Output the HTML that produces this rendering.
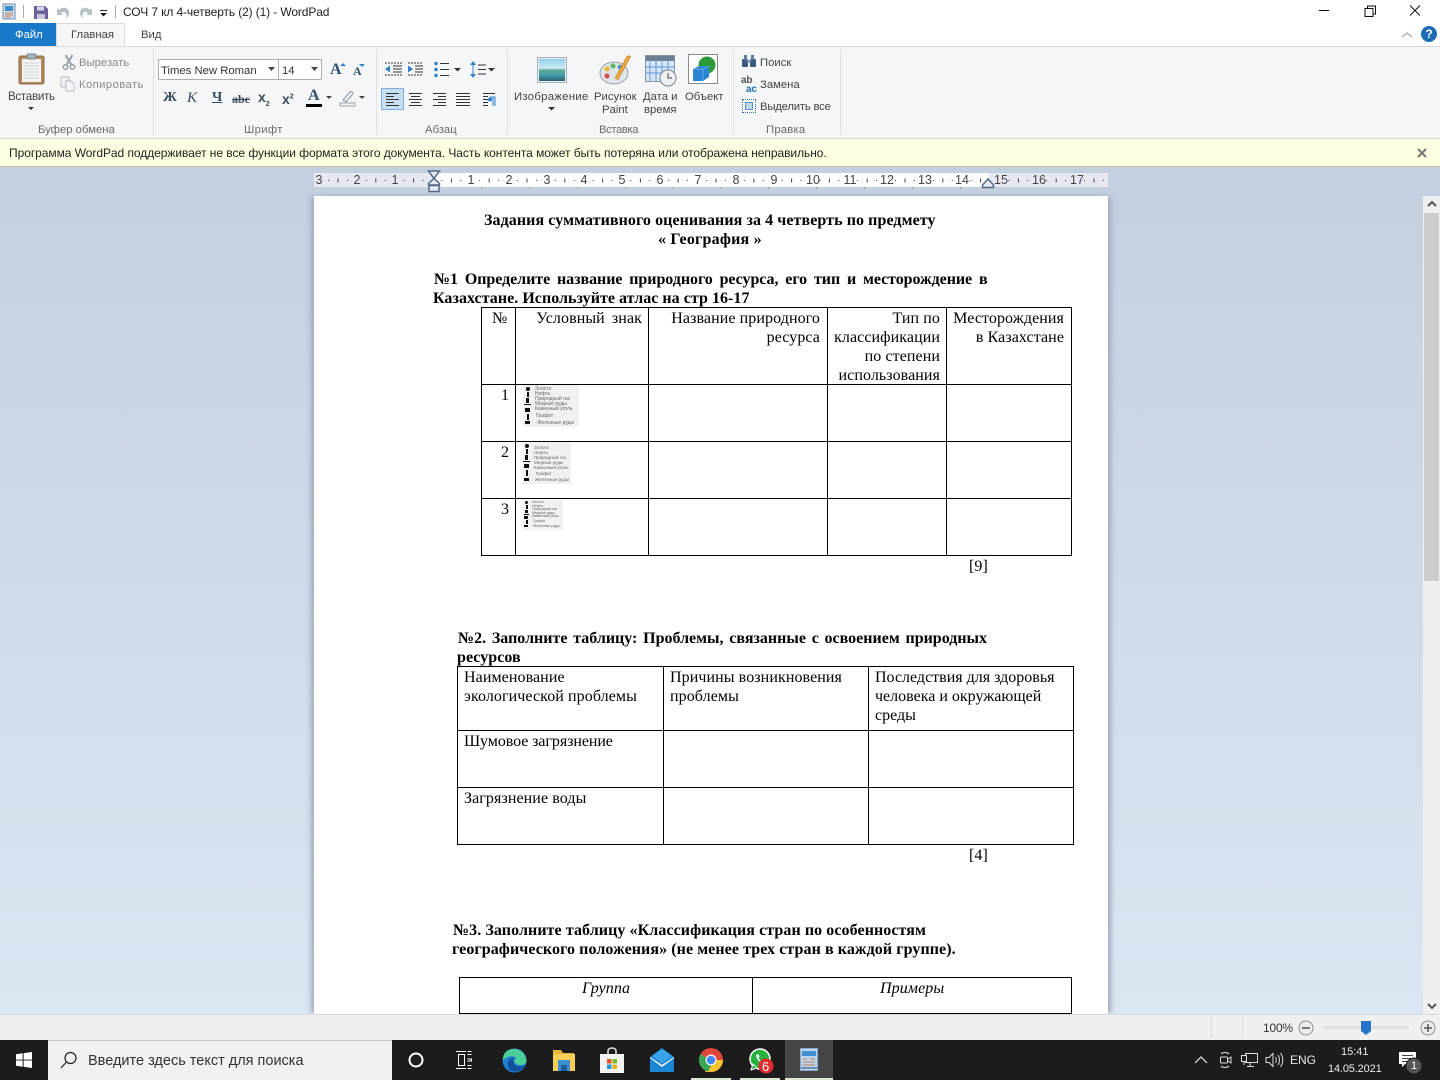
<!DOCTYPE html>
<html lang="ru"><head><meta charset="utf-8"><title>WordPad</title>
<style>
html,body{margin:0;padding:0}
body{width:1440px;height:1080px;overflow:hidden;position:relative;background:#fff;font-family:"Liberation Sans","DejaVu Sans",sans-serif;font-size:12px;color:#333}
.a{position:absolute}
.t{position:absolute;white-space:nowrap}
.u{font-size:11.3px;color:#444;margin-top:1px}
.g{font-size:11.3px;color:#6b6b6b;margin-top:1px}
.d{font-family:"Liberation Serif",serif;font-size:16px;line-height:19px;letter-spacing:.08px;color:#000;white-space:nowrap;position:absolute}
.b{font-weight:bold}
.r{text-align:right}
.h{position:absolute;background:#000;height:1px}
.v{position:absolute;background:#000;width:1px}
.rn{position:absolute;top:173px;font-size:12.5px;color:#444;width:16px;text-align:center;line-height:14px}
svg{position:absolute;overflow:visible}
.leg{position:absolute;background:#f1f1f1;overflow:hidden}
.leg span{position:absolute;white-space:nowrap;color:#666}
.leg i{position:absolute;background:#111}
</style></head><body>

<!-- title bar -->
<svg style="left:2px;top:3px" width="16" height="18"><rect x="1" y="1" width="12" height="15" fill="#cfe0f2" stroke="#6d8db5"/><rect x="3" y="3" width="8" height="5" fill="#3f8fd0"/><path d="M3 10h8M3 12h8M3 14h6" stroke="#c08050"/></svg>
<div class="a" style="left:23px;top:5px;width:1px;height:13px;background:#aaa"></div>
<svg style="left:33px;top:5px" width="16" height="15"><path d="M1 1h11l3 3v10H1z" fill="#6e5f9c"/><rect x="4" y="1.500" width="7" height="4" fill="#d8d8ea"/><rect x="4" y="9" width="8" height="5" fill="#c9c6de"/></svg>
<svg style="left:56px;top:4px" width="16" height="16"><path d="M4 5c4-3 9-1 9 4 0 2-1 4-3 5 1-3 0-6-2-6-1 0-2 .5-3 1l2 2H1V4l2 2z" fill="#b9bfc6"/></svg>
<svg style="left:77px;top:4px" width="16" height="16"><path d="M12 5C8 2 3 4 3 9c0 2 1 4 3 5-1-3 0-6 2-6 1 0 2 .5 3 1L9 11h6V4l-2 2z" fill="#b9c4c9"/></svg>
<svg style="left:99px;top:9px" width="9" height="9"><path d="M1 4h7l-3.500 3.500z" fill="#222"/><path d="M1 1.500h7" stroke="#222"/></svg>
<div class="a" style="left:115px;top:5px;width:1px;height:13px;background:#aaa"></div>
<div class="t" style="left:123px;top:4px;font-size:12px;color:#222;line-height:16px;letter-spacing:-.12px">СОЧ 7 кл 4-четверть (2) (1) - WordPad</div>
<svg style="left:1318px;top:5px" width="110" height="12"><path d="M1 5.500h10" stroke="#111"/><path d="M47 3.500h8v8h-8zM49.500 3V1h8v8h-2.500" fill="none" stroke="#111"/><path d="M92 .5l10 10M102 .5l-10 10" stroke="#111"/></svg>

<!-- tabs -->
<div class="a" style="left:0;top:23px;width:56px;height:23px;background:#1979ca"></div>
<div class="t" style="left:15px;top:28px;color:#fff;font-size:11.3px;line-height:14px">Файл</div>
<div class="a" style="left:56px;top:23px;width:69px;height:24px;background:#f5f6f7;border:1px solid #dadbdc;border-bottom:none;box-sizing:border-box"></div>
<div class="t u" style="left:71px;top:27px;line-height:14px">Главная</div>
<div class="t u" style="left:141px;top:27px;line-height:14px">Вид</div>
<svg style="left:1401px;top:31px" width="12" height="8"><path d="M1 6l5-4 5 4" fill="none" stroke="#b5b5b5" stroke-width="1.500"/></svg>
<div class="a" style="left:1421px;top:26px;width:16px;height:16px;border-radius:50%;background:#1c6bb5;color:#fff;font-weight:bold;font-size:12px;line-height:16px;text-align:center">?</div>

<!-- ribbon -->
<div class="a" style="left:0;top:46px;width:1440px;height:92px;background:#f5f6f7;border-top:1px solid #dadbdc"></div>
<div class="a" style="left:0;top:138px;width:1440px;height:1px;background:#d6d6ce"></div>
<div class="a" style="left:153px;top:49px;width:1px;height:86px;background:#e2e3e4"></div>
<div class="a" style="left:376px;top:49px;width:1px;height:86px;background:#e2e3e4"></div>
<div class="a" style="left:507px;top:49px;width:1px;height:86px;background:#e2e3e4"></div>
<div class="a" style="left:733px;top:49px;width:1px;height:86px;background:#e2e3e4"></div>
<div class="a" style="left:840px;top:49px;width:1px;height:86px;background:#e2e3e4"></div>

<svg style="left:18px;top:53px" width="28" height="32"><rect x="1" y="3" width="25" height="28" rx="2" fill="#b58a5a" stroke="#8c6a45"/><rect x="4" y="6" width="19" height="23" fill="#f3f3f3"/><path d="M6 10h15M6 13h15M6 16h15M6 19h15M6 22h15M6 25h15" stroke="#cfd6dd"/><rect x="9" y="1" width="9" height="5" rx="1" fill="#a9b2ba" stroke="#7b858e"/></svg>
<div class="t u" style="left:8px;top:89px;line-height:14px;letter-spacing:-.3px;font-size:11.6px">Вставить</div>
<svg style="left:27px;top:106px" width="8" height="5"><path d="M1 1h6L4 4z" fill="#333"/></svg>
<svg style="left:62px;top:54px" width="14" height="16"><path d="M3.500 1l6 10M10.500 1L4.500 11" stroke="#9aa3ab" stroke-width="2"/><circle cx="3.500" cy="13" r="2.300" fill="none" stroke="#9aa3ab" stroke-width="1.500"/><circle cx="10.500" cy="13" r="2.300" fill="none" stroke="#9aa3ab" stroke-width="1.500"/></svg>
<div class="t g" style="left:79px;top:55px;line-height:14px;color:#8c8c8c">Вырезать</div>
<svg style="left:60px;top:76px" width="16" height="16"><rect x="1" y="1" width="8" height="10" fill="#eef1f4" stroke="#b4bcc4"/><path d="M6 5h5l3 3v7H6z" fill="#f5f6f7" stroke="#b4bcc4"/></svg>
<div class="t g" style="left:79px;top:77px;line-height:14px;color:#8c8c8c;letter-spacing:.4px">Копировать</div>
<div class="t g" style="left:38px;top:122px;line-height:14px">Буфер обмена</div>

<!-- font -->
<div class="a" style="left:158px;top:59px;width:121px;height:21px;background:#fff;border:1px solid #abadb3;box-sizing:border-box"></div>
<div class="a" style="left:278px;top:59px;width:44px;height:21px;background:#fff;border:1px solid #abadb3;box-sizing:border-box"></div>
<div class="t" style="left:161px;top:64px;line-height:14px;font-size:11.3px;color:#333">Times New Roman</div>
<div class="t" style="left:282px;top:64px;line-height:14px;font-size:11.3px;color:#333">14</div>
<svg style="left:268px;top:67px" width="8" height="5"><path d="M0 0h7L3.500 4z" fill="#444"/></svg>
<svg style="left:311px;top:67px" width="8" height="5"><path d="M0 0h7L3.500 4z" fill="#444"/></svg>
<div class="t" style="left:330px;top:61px;font:bold 16px/18px 'Liberation Serif',serif;color:#31506e">A</div>
<svg style="left:340px;top:63px" width="6" height="4"><path d="M0 3L3 0l3 3z" fill="#2f7fc4"/></svg>
<div class="t" style="left:353px;top:64px;font:bold 12px/14px 'Liberation Serif',serif;color:#31506e">A</div>
<svg style="left:359px;top:64px" width="6" height="4"><path d="M0 0h6L3 3z" fill="#2f7fc4"/></svg>
<div class="t" style="left:163px;top:90px;font:bold 14px/16px 'Liberation Serif',serif;color:#3a4a5a">Ж</div>
<div class="t" style="left:187px;top:90px;font:italic 15px/16px 'Liberation Serif',serif;color:#3a4a5a">К</div>
<div class="t" style="left:212px;top:90px;font:bold 14px/16px 'Liberation Serif',serif;color:#3a4a5a;text-decoration:underline">Ч</div>
<div class="t" style="left:232px;top:92px;font:bold 12px/14px 'Liberation Serif',serif;color:#3a4a5a;text-decoration:line-through">abc</div>
<div class="t" style="left:258px;top:89px;font:bold 14px/16px 'Liberation Sans',sans-serif;color:#3a4a5a">x<sub style="font-size:7px;line-height:0">2</sub></div>
<div class="t" style="left:282px;top:91px;font:bold 14px/16px 'Liberation Sans',sans-serif;color:#3a4a5a">x<sup style="font-size:7px;line-height:0">2</sup></div>
<div class="t" style="left:308px;top:88px;font:bold 16px/16px 'Liberation Serif',serif;color:#31506e">A</div>
<div class="a" style="left:306px;top:104px;width:16px;height:3px;background:#000"></div>
<svg style="left:326px;top:96px" width="7" height="4"><path d="M0 0h6L3 3z" fill="#444"/></svg>
<svg style="left:339px;top:90px" width="17" height="17"><path d="M4 10L11 2c1-1 3 0 3 1 0 1 0 1-1 2L7 12z" fill="#eef2f5" stroke="#8a97a3"/><rect x="1" y="13" width="15" height="3" fill="#f5f6f7" stroke="#9aa3ab"/></svg>
<svg style="left:359px;top:96px" width="7" height="4"><path d="M0 0h6L3 3z" fill="#444"/></svg>
<div class="t g" style="left:244px;top:122px;line-height:14px;letter-spacing:.3px">Шрифт</div>

<!-- paragraph -->
<svg style="left:382px;top:60px" width="130" height="62" fill="none">
<path d="M3 3h17M3 15h17" stroke="#333" stroke-dasharray="2 1"/><path d="M11 6h9M11 9h9M11 12h9" stroke="#333"/><path d="M3 9l5-3.500v7z" fill="#2f7fc4"/>
<path d="M26 3h15M26 15h15" stroke="#333" stroke-dasharray="2 1"/><path d="M33 6h8M33 9h8M33 12h8" stroke="#333"/><path d="M26 5.500v7l5-3.500z" fill="#2f7fc4"/>
<circle cx="54" cy="3.500" r="1.700" fill="#2f7fc4"/><circle cx="54" cy="9.500" r="1.700" fill="#2f7fc4"/><circle cx="54" cy="15.500" r="1.700" fill="#2f7fc4"/><path d="M58 3.500h9M58 9.500h9M58 15.500h9" stroke="#333"/>
<path d="M72 8h7l-3.500 3.500z" fill="#333"/>
<path d="M91 1l-3 4h6zM91 18l-3-4h6z" fill="#2f7fc4"/><path d="M91 5v9" stroke="#2f7fc4"/><path d="M96 5h8M96 9.500h8M96 14h8" stroke="#333"/><path d="M106 8h7l-3.500 3.500z" fill="#333"/>
</svg>
<div class="a" style="left:381px;top:88px;width:23px;height:22px;background:#c7dff5;border:1px solid #84acdd;box-sizing:border-box"></div>
<svg style="left:386px;top:93px" width="116" height="14" fill="none" stroke="#333">
<path d="M0 .5h13M0 3.500h8M0 6.500h13M0 9.500h8M0 12.500h13"/>
<path d="M23 .5h13M25 3.500h9M23 6.500h13M25 9.500h9M23 12.500h13"/>
<path d="M47 .5h13M52 3.500h8M47 6.500h13M52 9.500h8M47 12.500h13"/>
<path d="M70 .5h14M70 3.500h14M70 6.500h14M70 9.500h14M70 12.500h14"/>
<path d="M97 .5h12M97 3.500h5M97 6.500h5M97 9.500h5M97 12.500h5"/><path d="M104 4h5v9M107 4v9" stroke="#2f7fc4"/><circle cx="104" cy="6.500" r="2" fill="#2f7fc4" stroke="none"/>
</svg>
<div class="t g" style="left:425px;top:122px;line-height:14px">Абзац</div>

<!-- insert -->
<svg style="left:537px;top:57px" width="30" height="26"><rect x=".5" y=".5" width="29" height="25" fill="#e8eef2" stroke="#a7b1ba"/><defs><linearGradient id="ls" x1="0" y1="0" x2="0" y2="1"><stop offset="0" stop-color="#8fd0ee"/><stop offset=".42" stop-color="#cfeaf0"/><stop offset=".5" stop-color="#5fa898"/><stop offset=".75" stop-color="#3f9aa8"/><stop offset="1" stop-color="#2f5f6a"/></linearGradient></defs><rect x="2" y="2" width="26" height="22" fill="url(#ls)"/></svg>
<div class="t u" style="left:514px;top:89px;line-height:14px;letter-spacing:.3px">Изображение</div>
<svg style="left:548px;top:107px" width="7" height="4"><path d="M0 0h7L3.500 3.500z" fill="#333"/></svg>
<svg style="left:600px;top:55px" width="33" height="30"><ellipse cx="14" cy="18" rx="14" ry="11" fill="#dfe4e8" stroke="#9aa3ab"/><circle cx="7" cy="21" r="2.500" fill="#d94a4a"/><circle cx="7" cy="14" r="2.500" fill="#e8b53a"/><circle cx="13" cy="11" r="2.500" fill="#5cb85c"/><circle cx="20" cy="12" r="2.300" fill="#4a8fd9"/><path d="M31 1L18 25l-3-2L27 1z" fill="#e8a53a" stroke="#b87a20" stroke-width=".5"/></svg>
<div class="t u" style="left:594px;top:89px;line-height:14px">Рисунок</div>
<div class="t u" style="left:602px;top:102px;line-height:14px">Paint</div>
<svg style="left:645px;top:55px" width="32" height="32"><rect x=".5" y=".5" width="29" height="26" fill="#d7e6f6" stroke="#8a97a3"/><rect x="1" y="1" width="28" height="5" fill="#6d7f94"/><path d="M5 6v20M11 6v20M17 6v20M23 6v20M1 12h28M1 18h28" stroke="#5f9ad9"/><circle cx="23" cy="23" r="8" fill="#eef1f4" stroke="#7b858e"/><path d="M23 18v5h4" fill="none" stroke="#444"/></svg>
<div class="t u" style="left:643px;top:89px;line-height:14px">Дата и</div>
<div class="t u" style="left:644px;top:102px;line-height:14px">время</div>
<svg style="left:688px;top:54px" width="30" height="31"><rect x=".5" y=".5" width="29" height="29" fill="#fff" stroke="#8a8a8a"/><circle cx="19" cy="11" r="8.500" fill="#2f9a3a"/><path d="M5 15l6-3h10v11l-6 4H5z" fill="#2a85d5"/><path d="M5 15h10v12M15 15l6-3" fill="none" stroke="#62a9e6"/></svg>
<div class="t u" style="left:685px;top:89px;line-height:14px">Объект</div>
<div class="t g" style="left:599px;top:122px;line-height:14px;letter-spacing:-.4px">Вставка</div>

<!-- edit -->
<svg style="left:741px;top:54px" width="16" height="14"><rect x="1" y="5" width="6" height="8" rx="1" fill="#3a5a7d"/><rect x="9" y="5" width="6" height="8" rx="1" fill="#3a5a7d"/><rect x="3" y="1" width="3" height="5" fill="#5e7c9d"/><rect x="10" y="1" width="3" height="5" fill="#5e7c9d"/><rect x="6" y="6" width="4" height="3" fill="#7b93ad"/></svg>
<div class="t u" style="left:760px;top:55px;line-height:14px">Поиск</div>
<div class="t" style="left:741px;top:76px;font:bold 10px/9px 'Liberation Sans',sans-serif;color:#555;letter-spacing:-.2px">ab<br><span style="color:#1f6fb5;margin-left:5px">ac</span></div>
<div class="t u" style="left:760px;top:77px;line-height:14px">Замена</div>
<div class="a" style="left:742px;top:99px;width:14px;height:14px;border:1px dotted #2f6fb5;box-sizing:border-box;background:#fff"></div>
<div class="a" style="left:745px;top:102px;width:8px;height:8px;background:#bcd8ef;border:1px solid #5a93c9;box-sizing:border-box"></div>
<div class="t u" style="left:760px;top:99px;line-height:14px;letter-spacing:-.2px">Выделить все</div>
<div class="t g" style="left:766px;top:122px;line-height:14px;letter-spacing:.2px">Правка</div>

<!-- info bar -->
<div class="a" style="left:0;top:139px;width:1440px;height:27px;background:#ffffe1;border-bottom:1px solid #c4c4b2;box-sizing:content-box"></div>
<div class="t" style="left:9px;top:146px;font-size:12px;line-height:14px;color:#222;letter-spacing:-.05px">Программа WordPad поддерживает не все функции формата этого документа. Часть контента может быть потеряна или отображена неправильно.</div>
<svg style="left:1417px;top:148px" width="10" height="10"><path d="M1 1l8 8M9 1L1 9" stroke="#777" stroke-width="2"/></svg>

<!-- workspace -->
<div class="a" style="left:0;top:167px;width:1440px;height:847px;background:linear-gradient(#c4cfe0,#dbe6f3)"></div>
<!-- ruler -->
<div class="a" style="left:314px;top:173px;width:794px;height:14px;background:#e6e9f1"></div>
<div class="a" style="left:433px;top:173px;width:555px;height:14px;background:#fff"></div>
<div class="rn" style="left:311px">3</div><div class="rn" style="left:349px">2</div><div class="rn" style="left:387px">1</div>
<div class="rn" style="left:463px">1</div><div class="rn" style="left:501px">2</div><div class="rn" style="left:539px">3</div><div class="rn" style="left:576px">4</div><div class="rn" style="left:614px">5</div><div class="rn" style="left:652px">6</div><div class="rn" style="left:690px">7</div><div class="rn" style="left:728px">8</div><div class="rn" style="left:766px">9</div><div class="rn" style="left:804px;width:18px">10</div><div class="rn" style="left:841px;width:18px">11</div><div class="rn" style="left:878px;width:18px">12</div><div class="rn" style="left:916px;width:18px">13</div><div class="rn" style="left:953px;width:18px">14</div><div class="rn" style="left:992px;width:18px">15</div><div class="rn" style="left:1030px;width:18px">16</div><div class="rn" style="left:1068px;width:18px">17</div>
<svg style="left:314px;top:173px" width="794" height="16">
<path d="M14 7.500H794" stroke="#444" stroke-dasharray="1 17.900" fill="none"/>
<path d="M23.500 7.500H794" stroke="#444" stroke-width="4" stroke-dasharray="1 36.800" fill="none"/>
<path d="M167 15H675" stroke="#999" stroke-width="2" stroke-dasharray="1 46.900" fill="none"/>
</svg>
<svg style="left:427px;top:170px" width="14" height="24" fill="#e6ebf2" stroke="#546a83" stroke-width="1.500"><path d="M1.500 1h11L7 8.500zM1.500 15V13.500L7 8.500l5.500 5V15z"/><rect x="2" y="15.500" width="10" height="6"/></svg>
<svg style="left:981px;top:178px" width="14" height="11" fill="#e6ebf2" stroke="#546a83" stroke-width="1.500"><path d="M1.500 9.500V7L7 1l5.500 6v2.500z"/></svg>

<!-- page -->
<div class="a" style="left:314px;top:196px;width:794px;height:818px;background:#fff;box-shadow:4px 0 5px -1px #9eaac0,-4px 0 5px -1px #9eaac0"></div>

<!-- doc text -->
<div class="d b" style="left:484px;top:211px">Задания суммативного оценивания за 4 четверть по предмету</div>
<div class="d b" style="left:658px;top:230px;letter-spacing:.2px">« География »</div>
<div class="d b" style="left:434px;top:270px;word-spacing:2.900px;letter-spacing:-.05px">№1 Определите название природного ресурса, его тип и месторождение в</div>
<div class="d b" style="left:433px;top:289px;letter-spacing:.04px">Казахстане. Используйте атлас на стр 16-17</div>

<!-- table 1 -->
<div class="h" style="left:481px;top:307px;width:591px"></div><div class="h" style="left:481px;top:384px;width:591px"></div><div class="h" style="left:481px;top:441px;width:591px"></div><div class="h" style="left:481px;top:498px;width:591px"></div><div class="h" style="left:481px;top:555px;width:591px"></div>
<div class="v" style="left:481px;top:307px;height:249px"></div><div class="v" style="left:515px;top:307px;height:249px"></div><div class="v" style="left:648px;top:307px;height:249px"></div><div class="v" style="left:827px;top:307px;height:249px"></div><div class="v" style="left:946px;top:307px;height:249px"></div><div class="v" style="left:1071px;top:307px;height:249px"></div>
<div class="d" style="left:492px;top:309px">№</div>
<div class="d r" style="right:798px;top:309px;word-spacing:3px">Условный знак</div>
<div class="d r" style="right:620px;top:309px">Название природного<br>ресурса</div>
<div class="d r" style="right:500px;top:309px">Тип по<br>классификации<br>по степени<br>использования</div>
<div class="d r" style="right:376px;top:309px">Месторождения<br>в Казахстане</div>
<div class="d" style="left:501px;top:386px">1</div><div class="d" style="left:501px;top:443px">2</div><div class="d" style="left:501px;top:500px">3</div>

<div class="leg" style="left:523px;top:385px;width:56px;height:42px;font-size:5px;line-height:5.100px">
<i style="left:3px;top:2px;width:4px;height:4px;border-radius:50%"></i><i style="left:4px;top:7px;width:2px;height:5px"></i><i style="left:3px;top:13px;width:3px;height:5px"></i><i style="left:1px;top:19px;width:7px;height:1px"></i><i style="left:2px;top:23px;width:5px;height:4px"></i><i style="left:4px;top:29px;width:2px;height:6px"></i><i style="left:2px;top:36px;width:5px;height:3px"></i>
<span style="left:12px;top:2px">Золото<br>Нефть<br>Природный газ<br>Медные руды<br>Каменный уголь</span><span style="left:13px;top:29px">Графит</span><span style="left:14px;top:36px">Железные руды</span></div>
<div class="leg" style="left:523px;top:442px;width:48px;height:42px;font-size:4.600px;line-height:5px">
<i style="left:2px;top:2px;width:4px;height:4px;border-radius:50%"></i><i style="left:3px;top:7px;width:2px;height:5px"></i><i style="left:2px;top:13px;width:3px;height:5px"></i><i style="left:0;top:19px;width:7px;height:1px"></i><i style="left:1px;top:22px;width:5px;height:4px"></i><i style="left:3px;top:28px;width:2px;height:6px"></i><i style="left:1px;top:36px;width:5px;height:3px"></i>
<span style="left:11px;top:3px">Золото<br>Нефть<br>Природный газ<br>Медные руды<br>Каменный уголь</span><span style="left:13px;top:29px">Графит</span><span style="left:12px;top:35px">Железные руды</span></div>
<div class="leg" style="left:523px;top:500px;width:40px;height:30px;font-size:3.600px;line-height:3.600px">
<i style="left:2px;top:1px;width:3px;height:3px;border-radius:50%"></i><i style="left:3px;top:5px;width:2px;height:4px"></i><i style="left:2px;top:10px;width:3px;height:3px"></i><i style="left:1px;top:14px;width:5px;height:1px"></i><i style="left:1px;top:16px;width:4px;height:3px"></i><i style="left:3px;top:20px;width:2px;height:4px"></i><i style="left:1px;top:25px;width:4px;height:2px"></i>
<span style="left:9px;top:1px">Золото<br>Нефть<br>Природный газ<br>Медные руды<br>Каменный уголь</span><span style="left:10px;top:20px">Графит</span><span style="left:10px;top:25px">Железные руды</span></div>

<div class="d" style="left:969px;top:557px">[9]</div>

<div class="d b" style="left:458px;top:629px;word-spacing:1.750px;letter-spacing:0">№2. Заполните таблицу: Проблемы, связанные с освоением природных</div>
<div class="d b" style="left:457px;top:648px;letter-spacing:.05px">ресурсов</div>

<!-- table 2 -->
<div class="h" style="left:457px;top:666px;width:617px"></div><div class="h" style="left:457px;top:730px;width:617px"></div><div class="h" style="left:457px;top:787px;width:617px"></div><div class="h" style="left:457px;top:844px;width:617px"></div>
<div class="v" style="left:457px;top:666px;height:179px"></div><div class="v" style="left:663px;top:666px;height:179px"></div><div class="v" style="left:868px;top:666px;height:179px"></div><div class="v" style="left:1073px;top:666px;height:179px"></div>
<div class="d" style="left:464px;top:668px">Наименование<br>экологической проблемы</div>
<div class="d" style="left:670px;top:668px">Причины возникновения<br>проблемы</div>
<div class="d" style="left:875px;top:668px;letter-spacing:0">Последствия для здоровья<br>человека и окружающей<br>среды</div>
<div class="d" style="left:464px;top:732px;letter-spacing:-.08px">Шумовое загрязнение</div>
<div class="d" style="left:464px;top:789px">Загрязнение воды</div>
<div class="d" style="left:969px;top:846px">[4]</div>

<div class="d b" style="left:453px;top:921px">№3. Заполните таблицу «Классификация стран по особенностям</div>
<div class="d b" style="left:452px;top:940px">географического положения» (не менее трех стран в каждой группе).</div>

<!-- table 3 -->
<div class="h" style="left:459px;top:977px;width:613px"></div><div class="h" style="left:459px;top:1013px;width:613px"></div>
<div class="v" style="left:459px;top:977px;height:37px"></div><div class="v" style="left:752px;top:977px;height:37px"></div><div class="v" style="left:1071px;top:977px;height:37px"></div>
<div class="d" style="left:582px;top:979px;font-style:italic">Группа</div>
<div class="d" style="left:880px;top:979px;font-style:italic">Примеры</div>

<!-- scrollbar -->
<div class="a" style="left:1423px;top:196px;width:17px;height:818px;background:#f0f0f0"></div>
<div class="a" style="left:1424px;top:213px;width:15px;height:368px;background:#cdcdcd"></div>
<svg style="left:1427px;top:201px" width="10" height="7"><path d="M1 5l4-4 4 4" fill="none" stroke="#555" stroke-width="2"/></svg>
<svg style="left:1427px;top:1003px" width="10" height="7"><path d="M1 1l4 4 4-4" fill="none" stroke="#555" stroke-width="2"/></svg>

<!-- status bar -->
<div class="a" style="left:0;top:1014px;width:1440px;height:26px;background:#f0f0f0;border-top:1px solid #d9d9d9;box-sizing:border-box"></div>
<div class="a" style="left:1211px;top:1016px;width:1px;height:22px;background:#dcdcdc"></div>
<div class="a" style="left:1242px;top:1016px;width:1px;height:22px;background:#dcdcdc"></div>
<div class="t" style="left:1263px;top:1021px;font-size:12px;line-height:14px;color:#333;letter-spacing:-.2px">100%</div>
<svg style="left:1298px;top:1020px" width="136" height="16"><circle cx="8" cy="8" r="7" fill="#ececec" stroke="#8e8e8e"/><path d="M4 8h8" stroke="#555" stroke-width="1.500"/><rect x="26" y="6.500" width="85" height="2" fill="#e2e2e2" stroke="#d8d8d8" stroke-width=".5"/><path d="M63 1h10v10l-5 4-5-4z" fill="#2574c7"/><circle cx="130" cy="8" r="7" fill="#ececec" stroke="#8e8e8e"/><path d="M126 8h8M130 4v8" stroke="#555" stroke-width="1.500"/></svg>

<!-- taskbar -->
<div class="a" style="left:0;top:1040px;width:1440px;height:40px;background:#1c1c1c"></div>
<svg style="left:16px;top:1052px" width="16" height="16"><path d="M0 2.300L6.600 1.300v6.300H0zM7.600 1.100L16 0v7.600H7.600zM0 8.500h6.600v6.300L0 13.800zM7.600 8.500H16V16l-8.400-1.200z" fill="#fff"/></svg>
<div class="a" style="left:48px;top:1040px;width:344px;height:40px;background:#f1f1f1;border-top:1px solid #c6c6c6;box-sizing:border-box"></div>
<svg style="left:60px;top:1051px" width="18" height="18"><circle cx="10.500" cy="7" r="5.500" fill="none" stroke="#222" stroke-width="1.200"/><path d="M6.500 11L1 17" stroke="#222" stroke-width="1.200"/></svg>
<div class="t" style="left:88px;top:1052px;font-size:14.500px;line-height:18px;color:#333">Введите здесь текст для поиска</div>
<svg style="left:408px;top:1052px" width="16" height="16"><circle cx="8" cy="8" r="6.500" fill="none" stroke="#fff" stroke-width="2"/></svg>
<svg style="left:455px;top:1051px" width="18" height="18" fill="none" stroke="#fff"><path d="M1 .5h10M1 17.500h10M3.500 3.500h6v11h-6zM12.500 .5h4M12.500 3.500h4M12.500 8h4v2h-4M12.500 14.500h4M12.500 17.500h4" stroke-width="1"/></svg>
<svg style="left:502px;top:1048px" width="25" height="25"><circle cx="12.500" cy="12.500" r="12" fill="#1f7fd0"/><path d="M5 3C12-2 24 2 24.500 13c0 3-3 4-6 4-4 0-6-2-6-4 0-1 .5-2 2-3C11 7 6 8 1 12 1 8 2 5 5 3z" fill="#4ccf9a"/><path d="M6 16c0-4 3-6 6-6-1 2-1 5 1 7 3 2 7 2 10 0-2 5-8 8-13 6-3-1-4-4-4-7z" fill="#0f4f9e"/></svg>
<svg style="left:553px;top:1048px" width="22" height="23"><path d="M0 2h8l2 3h11v5H0z" fill="#e8b53a"/><rect y="6" width="22" height="17" fill="#f6cf57"/><rect x="5" y="12" width="12" height="11" fill="#3b8ed0"/><rect x="8" y="17" width="6" height="6" fill="#1f5f95"/></svg>
<svg style="left:600px;top:1047px" width="24" height="26"><path d="M8 8V4c0-4 8-4 8 0v4" fill="none" stroke="#e8e8e8" stroke-width="1.500"/><rect y="7" width="24" height="19" fill="#f2f2f2"/><rect x="7" y="12" width="4.500" height="4.500" fill="#e0502a"/><rect x="12.500" y="12" width="4.500" height="4.500" fill="#7fb92a"/><rect x="7" y="17.500" width="4.500" height="4.500" fill="#1f9ad6"/><rect x="12.500" y="17.500" width="4.500" height="4.500" fill="#f0b01e"/></svg>
<svg style="left:650px;top:1048px" width="24" height="24"><path d="M0 9L12 0l12 9v15H0z" fill="#1b86d1"/><path d="M0 9l12 8 12-8v1L12 19 0 10z" fill="#fff"/><path d="M2 8l10-7 10 7-10 7z" fill="#38a4e6"/></svg>
<svg style="left:699px;top:1048px" width="24" height="24"><circle cx="12" cy="12" r="12" fill="#e0453a"/><path d="M12 12h12A12 12 0 0 1 12 24l-6 0z" fill="#f8c52e"/><path d="M1.600 6A12 12 0 0 0 9 23.600L14 14z" fill="#3aa757"/><circle cx="12" cy="12" r="5.500" fill="#fff"/><circle cx="12" cy="12" r="4.300" fill="#4285f4"/></svg>
<svg style="left:748px;top:1048px" width="26" height="26"><circle cx="12" cy="11" r="10" fill="#25b03f" stroke="#fff" stroke-width="1.500"/><path d="M3 22l2-6 4 4z" fill="#25b03f" stroke="#fff"/><path d="M8 7c0 4 4 8 8 8l1-2-3-1-1 1c-1-.5-2-2-2.500-3l1-1-1-3z" fill="#fff"/><circle cx="18" cy="18" r="7.500" fill="#e22b2b"/></svg>
<div class="t" style="left:762px;top:1059px;color:#fff;font-size:13px;line-height:15px">6</div>
<div class="a" style="left:691px;top:1078px;width:40px;height:2px;background:#dfe8d0"></div>
<div class="a" style="left:740px;top:1078px;width:40px;height:2px;background:#dfe8d0"></div>
<div class="a" style="left:785px;top:1040px;width:48px;height:40px;background:#464646"></div>
<div class="a" style="left:785px;top:1078px;width:48px;height:2px;background:#dfe8d0"></div>
<svg style="left:800px;top:1048px" width="18" height="24"><rect x=".5" y=".5" width="17" height="22" fill="#bcd5ee" stroke="#8aa9c9"/><rect x="2" y="3" width="14" height="5" fill="#3f8fd0"/><path d="M3 11h4M10 11h5M3 14h12M3 17h12" stroke="#c08050"/><path d="M1 20h16" stroke="#6a8fb5" stroke-width="2"/></svg>

<svg style="left:1194px;top:1055px" width="14" height="9"><path d="M1 8l6-6 6 6" fill="none" stroke="#e8e8e8" stroke-width="1.200"/></svg>
<svg style="left:1219px;top:1051px" width="14" height="18" fill="none" stroke="#ddd"><path d="M2 3c2-2 6-2 8 0M2 15c2 2 6 2 8 0"/><rect x="1.500" y="6" width="7" height="6" rx="1"/><path d="M9 8l3-2v6l-3-2"/></svg>
<svg style="left:1241px;top:1052px" width="17" height="16" fill="none" stroke="#ddd"><rect x="4.500" y="1.500" width="12" height="9"/><rect x=".5" y="3.500" width="5" height="6" fill="#1c1c1c"/><path d="M3 10v3M9 11v3M6 14.500h7"/></svg>
<svg style="left:1265px;top:1052px" width="18" height="16" fill="none" stroke="#ddd"><path d="M1 5.500h3L8 1.500v13L4 10.500H1z"/><path d="M10.500 5c1 1.500 1 4.500 0 6M13 3c2 3 2 7 0 10M15.500 1c3 4 3 10 0 14"/></svg>
<div class="t" style="left:1290px;top:1052px;color:#eaeaea;font-size:12px;line-height:16px">ENG</div>
<div class="t" style="left:1341px;top:1044px;color:#eaeaea;font-size:11px;line-height:16px">15:41</div>
<div class="t" style="left:1328px;top:1061px;color:#eaeaea;font-size:11px;line-height:16px;letter-spacing:-.15px">14.05.2021</div>
<svg style="left:1399px;top:1051px" width="24" height="24"><path d="M0 1h17v12H6l-3 3v-3H0z" fill="#fff"/><path d="M3 4.500h11M3 7.500h11M3 10.500h7" stroke="#444"/><circle cx="15" cy="15" r="8" fill="#555" stroke="#1c1c1c"/></svg>
<div class="t" style="left:1411px;top:1059px;color:#fff;font-size:11px;line-height:14px">1</div>
</body></html>
